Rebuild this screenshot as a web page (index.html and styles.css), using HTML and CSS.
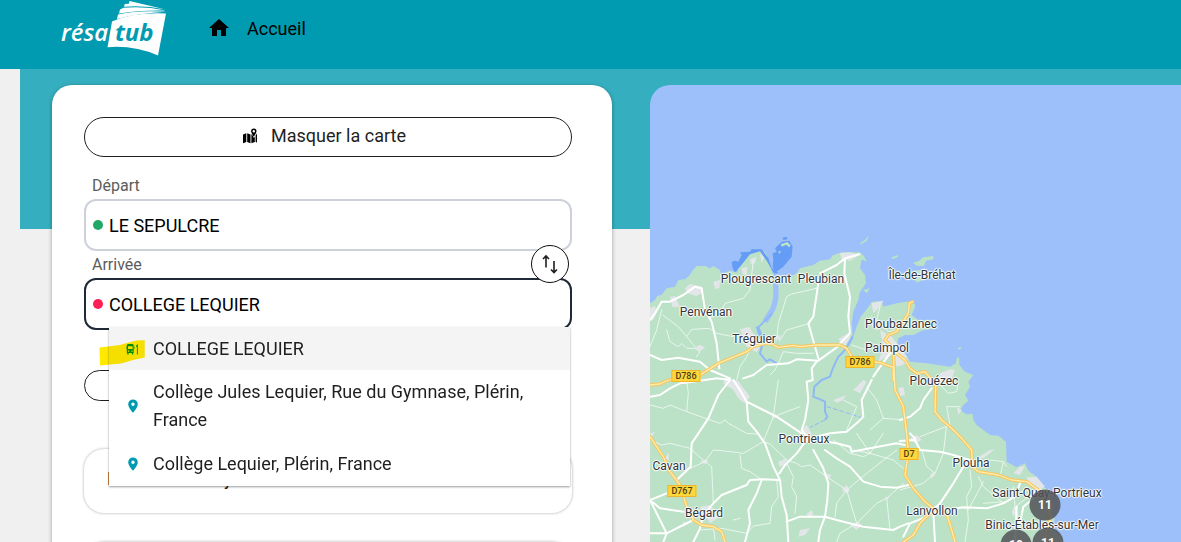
FILE: index.html
```html
<!DOCTYPE html>
<html lang="fr">
<head>
<meta charset="utf-8">
<meta name="viewport" content="width=device-width, initial-scale=1">
<title>résa tub</title>
<link rel="stylesheet" href="styles.css">
</head>
<body>
<header class="topbar">
  <a class="logo" href="#" aria-label="résa tub">
    <svg viewBox="0 0 106 56" width="106" height="56">
      <path class="logo-page" d="M51 21.500Q72 12 105 13.500L97 55.500Q73 45 46.500 47.200Z"/>
      <path class="logo-page" d="M57 14.500Q78 10 105 11.800Q78 13 56 19Z"/>
      <path class="logo-page" d="M62.500 7.800Q84 6 104.500 10.500Q78 10 58 13.500L59 9.500Z"/>
      <path class="logo-page" d="M68.500 1L104.500 9.500Q84 5 63 6.700L63.800 4L68 3.700Z"/>
      <text class="logo-resa" x="0" y="41">résa</text>
      <text class="logo-tub" x="54" y="41">tub</text>
    </svg>
  </a>
  <nav class="nav">
    <a class="nav-link" href="#">
      <svg viewBox="0 0 24 24" width="24" height="24" aria-hidden="true"><path d="M10 20v-6h4v6h5v-8h3L12 3 2 12h3v8z"/></svg>
      <span>Accueil</span>
    </a>
  </nav>
</header>

<main class="page">
  <section class="card">
    <button class="pill" type="button">
      <svg viewBox="0 0 16 16" width="16" height="16" aria-hidden="true">
        <path d="M1 6.500L4.300 5.200V14L1 15.200ZM5.200 5.200L8.500 6.500V15.200L5.200 14ZM9.400 6.500L10 6.300L11.900 10L12.800 8.300V14L9.400 15.200ZM13.600 7.500L15 5.500V14.500L13.600 14Z"/>
        <path fill-rule="evenodd" d="M11.800 0.500A2.700 2.700 0 0 1 14.500 3.200C14.500 5 11.800 8.600 11.800 8.600S9.100 5 9.100 3.200A2.700 2.700 0 0 1 11.800 0.500ZM11.800 2A1.200 1.200 0 1 0 11.800 4.400A1.200 1.200 0 1 0 11.800 2Z"/>
      </svg>
      <span>Masquer la carte</span>
    </button>

    <form class="trip">
      <div class="field">
        <label class="field-label" for="from">Départ</label>
        <div class="field-box">
          <span class="dot dot-from"></span>
          <input class="field-input" id="from" type="text" value="LE SEPULCRE">
        </div>
      </div>
      <div class="field">
        <label class="field-label" for="to">Arrivée</label>
        <div class="field-box field-box-active">
          <span class="dot dot-to"></span>
          <input class="field-input" id="to" type="text" value="COLLEGE LEQUIER" autocomplete="off">
        </div>
        <button class="swap" type="button" aria-label="Inverser">
          <svg viewBox="0 0 20 20" width="20" height="20" aria-hidden="true"><path d="M6 13.500V2M3 5L6 2L9 5M14 7V18.500M11 15.500L14 18.500L17 15.500"/></svg>
        </button>
        <ul class="suggestions">
          <li class="suggestion suggestion-current">
            <svg class="suggestion-icon" viewBox="0 0 16 16" width="16" height="16" aria-hidden="true">
              <path fill-rule="evenodd" d="M3 3H7.500Q8.700 3 8.700 4.500V12H8.200V13.500H6.900V12H3.600V13.500H2.300V12H1.800V4.500Q1.800 3 3 3ZM3 5.200V8H7.600V5.200ZM3 9.500V10.800H4.200V9.500ZM6.400 9.500V10.800H7.600V9.500Z"/>
              <path d="M1 5.500H1.500V8H1ZM9 5.500H9.500V8H9ZM11.200 4.500L12.800 3V13.500H11.900V6H11.200Z"/>
            </svg>
            <span>COLLEGE LEQUIER</span>
            <svg class="marker-stroke" viewBox="0 0 46 26" width="46" height="26" aria-hidden="true"><path d="M0.500 7.500L21 5L37 .5L45.700 0.200V17.500L34 20L22 23.500L1 25.500Z"/></svg>
          </li>
          <li class="suggestion">
            <svg class="suggestion-icon" viewBox="0 0 16 16" width="16" height="16" aria-hidden="true"><path fill-rule="evenodd" d="M8 1.500A4.800 4.800 0 0 1 12.800 6.200C12.800 9.500 8 14.800 8 14.800S3.200 9.500 3.200 6.200A4.800 4.800 0 0 1 8 1.500ZM8 4.500A1.700 1.700 0 1 0 8 7.900A1.700 1.700 0 1 0 8 4.500Z"/></svg>
            <span>Collège Jules Lequier, Rue du Gymnase, Plérin, France</span>
          </li>
          <li class="suggestion">
            <svg class="suggestion-icon" viewBox="0 0 16 16" width="16" height="16" aria-hidden="true"><path fill-rule="evenodd" d="M8 1.500A4.800 4.800 0 0 1 12.800 6.200C12.800 9.500 8 14.800 8 14.800S3.200 9.500 3.200 6.200A4.800 4.800 0 0 1 8 1.500ZM8 4.500A1.700 1.700 0 1 0 8 7.900A1.700 1.700 0 1 0 8 4.500Z"/></svg>
            <span>Collège Lequier, Plérin, France</span>
          </li>
        </ul>
      </div>
      <button class="small-pill" type="button"></button>
    </form>

    <div class="panel">Horaires du trajet</div>
    <div class="panel"></div>
  </section>

  <section class="map">
    <svg class="map-drawing" viewBox="0 -405 1593 1371" width="531" height="457" aria-hidden="true">
      <path class="land" d="M0 250L15 240 22 228 35 225 50 205 75 200 85 180 105 178 120 165 125 155 140 138 165 138 180 145 190 138 210 150 213 165 240 152 262 158 270 130 290 105 320 92 345 96 352 110 358 135 370 165 385 165 420 170 440 160 450 145 490 135 510 122 540 118 548 106 575 97 630 97 642 108 650 125 635 118 630 145 645 165 648 190 630 215 625 240 610 275 605 310 608 345 590 372 605 365 618 325 632 290 655 262 665 245 695 243 700 260 740 250 770 245 790 245 796 258 785 285 805 300 845 300 865 325 820 330 790 345 765 345 745 355 742 378 765 398 780 425 830 430 900 440 918 430 920 415 927 412 928 435 945 455 970 465 955 485 960 500 945 525 955 542 940 555 930 570 950 583 968 582 970 600 980 615 1000 630 1020 645 1045 647 1068 665 1070 725 1100 742 1125 730 1135 752 1160 770 1170 795 1195 810 1210 860 1205 880 1215 900 1200 920 1230 950 1240 966H0Z"/>
      <path class="land" d="M790 128L805 124 820 112 850 108 850 118 828 122 822 138 800 137ZM785 155L805 150 835 155 830 175 800 188ZM722 115L740 105 745 110 730 117ZM632 68L645 60 658 44 650 62 630 75ZM922 385L935 380 930 389ZM640 210L660 205 650 220Z"/>
      <path class="shoal" d="M245 125L255 122 265 125 275 105 270 97 300 95 305 88 335 88 355 115 365 145 385 158 375 165 350 122 330 94 300 103 270 140 255 157 248 145ZM370 118L368 100 380 95 375 85 395 65 418 62 428 80 425 110 400 140 375 158 368 140ZM398 53L410 50 412 58 400 60Z"/>
      <path class="land" d="M392 73L412 66 422 76 418 82 408 74 396 80ZM384 96L392 92 390 101Z"/>
      <path class="river river-wide" d="M378 160L377 205Q382 235 367 270L345 305"/>
      <path class="river" d="M367 280L325 322L340 360L330 400L350 425L360 418L380 430M320 320L328 345L340 370M608 350Q590 390 565 410Q545 450 540 470L515 480L493 500L490 530L510 538L525 545V575L532 590L525 600"/>
      <path class="river river-thin" d="M525 600L480 622M530 560L580 575L640 595"/>
      <g class="town">
        <path d="M105 205L120 192 155 200 160 215 140 228 112 220ZM60 230L75 228 90 260 68 262ZM0 265L15 258 20 280 8 302 0 300ZM190 185L210 180 208 205 195 207ZM300 118L320 110 315 130 302 132ZM330 100L342 112 335 130ZM275 145L292 140 290 165 278 162ZM570 100L600 97 628 105 600 122 575 118ZM270 328L300 320 305 335 335 370 320 397 290 380ZM565 358L600 335 600 355 585 378ZM375 348L392 346 390 365ZM665 250L700 242 690 260 670 280ZM690 330L725 350 770 410 770 430 740 440 730 400 685 425 700 380ZM870 460L900 448 915 450 905 475 860 485ZM135 382L150 374 165 382 150 394ZM225 475L265 483 280 505 300 530 285 550 265 535 250 510 220 490ZM550 540L590 525 575 542 560 548ZM610 510L640 480 650 485 630 520ZM745 505L760 500 765 525 750 528ZM0 640L15 636 5 650ZM42 720L55 698 57 720ZM150 725L168 718 175 725 165 732ZM365 585L380 590 370 598ZM455 630L470 615 485 640 475 655ZM385 725L410 715 405 735 388 740ZM525 760L545 765 535 778 525 775ZM575 810L590 795 600 812 590 820ZM150 860L180 855 210 890 180 910ZM98 905L112 910 103 920ZM470 882L485 870 490 885 475 890ZM445 950L450 930 480 925 465 945ZM600 915L625 905 635 915 620 930ZM705 830L718 832 710 840ZM650 700L665 695 660 705ZM780 655L800 645 815 660 795 670ZM920 560L935 570 925 585ZM980 715L1020 690 1035 688 1000 715ZM840 765L850 755 855 765 845 775ZM1090 760L1110 740 1125 738 1110 765ZM1130 772L1160 770 1185 800 1160 812 1135 790ZM1085 875L1093 862 1103 878 1090 888ZM940 865L955 860 955 870ZM825 870L860 855 870 880 835 890Z"/>
      </g>
      <g class="road-minor">
        <path d="M35 270L20 330 0 380M38 285L85 320 110 350 125 328 178 325 200 340 250 350M50 330L60 365 85 380 95 370 110 385 135 385 150 395 140 410M110 350L135 380M178 295L210 280 225 250 280 235 300 210 310 120M380 360L385 310 410 230 425 222 500 205M390 360L410 330 480 310M490 400L440 400 400 395 385 430 375 450 360 465M300 385L290 410 270 440 260 480M0 555L40 565 60 555 110 575 175 598 210 610 225 600 235 610 290 640 320 642M110 480L115 520 110 575M0 660L35 675 60 670 120 685 165 725 185 740 190 850M120 745L165 725 190 690 215 692 240 695 280 700 340 665M270 705L275 745 300 755 330 775 340 780M340 665L370 590 385 480M370 590L450 560M340 665L360 672 410 720 440 730 455 740 480 735 530 770M410 730L430 770 425 800 440 830 435 880M380 780L385 830 365 860 360 910 310 918 290 940 215 925 150 930M620 640L660 700 610 690M550 660L600 700 640 710 660 700 700 640M660 700L730 720 760 745M530 770L590 810 560 850 555 890M590 810L650 760 740 690M590 810L620 910 680 850 710 835 760 790M710 835L720 930M620 910L570 940 560 966M590 630L620 560 580 540M650 500L680 540 700 595 660 630M700 595L765 600M605 375L650 390M690 260L680 300 715 335 740 330M665 290L680 330M250 900L270 895M195 960L190 920"/>
        <path d="M860 485L895 520 920 515 925 490M810 650L900 615 890 560 930 560M890 615L880 700 855 760 820 790 750 810M855 760L830 740 815 690M985 770L1000 800 1060 850M1000 785L955 870M960 750L965 800 950 830 955 900 945 966M1090 800L1095 860 1110 910M1090 865L1160 810M1000 850L1060 845M1020 720L1060 725 1070 740M1060 725L1050 770"/>
      </g>
      <g class="road">
        <path d="M0 300L15 280 35 245 60 245 100 225 135 200 155 205 165 270 185 305 200 370 208 445M628 103L585 115 560 135 510 160M585 115L583 160 600 230 595 290 600 340 570 370M505 190L490 290 475 310 495 380 505 415M0 405L35 420 85 413 150 425 180 450 240 475M280 475L310 465 350 435 415 430 440 418 505 422 570 375M500 425L485 445 488 480M0 530L30 525 60 505 90 490 130 485 200 475 240 480 205 525 175 595 125 670 122 740 80 780M250 480L270 510 290 545 295 605 320 635 345 670 370 740 390 780 395 830 410 885 415 966M290 545L340 570 380 590 455 640M488 480L470 485 475 540 465 600 455 630 470 650M480 655L540 640 590 635 625 605 640 590 635 540 665 480M670 470L680 455 720 400M470 660L440 700 405 735 388 760M500 660L560 670 600 680 605 695 660 685 740 670 765 675M525 690L560 715 600 740 640 785 690 800 740 803 775 795M490 690L520 745 535 790 532 840 525 890 510 930 505 966M385 780L340 778 300 780 290 795 215 825 190 850 160 885 150 925 130 966M335 780L320 820 295 870 300 910 285 966M410 905L450 890 525 890 560 900 640 920 730 930 750 920 775 910M0 840L30 865 100 875M0 840L30 900 50 940 40 966M0 940L50 940 100 915 130 900M0 840L50 820"/>
        <path d="M845 505L820 540 810 565 780 590 750 600M750 663L795 660 810 690 870 695 910 705 960 720M795 655L780 640M940 740L910 790 870 850 850 870 900 868 940 862 1010 865 1060 850 1095 830 1110 790M850 880L855 966M830 890L780 910 760 950M1100 860L1095 966M1170 820L1120 860 1110 910"/>
      </g>
      <g class="highway">
        <path d="M60 480L150 465 205 430 290 395 310 380 345 370 365 372 385 382 430 376 450 380 500 375 570 375 590 385 605 410M665 425L690 428 730 442V480M730 385L732 445 735 510 760 560 770 640 775 700 765 765 790 805 825 845 850 865 890 880 905 930 915 966M788 245L778 250 775 280 755 310 740 335 715 345 705 360 720 375 740 400 765 420 780 445 800 460 825 455 845 480 857 500 855 575 875 600 900 620 935 655 965 690 968 740 985 755 1045 765 1085 780 1130 785 1165 810 1185 830M1200 870V900L1185 950 1200 966M0 495L30 492 55 480M0 650L40 710 60 755 90 795 110 860 130 900 155 915 190 920 215 935 225 966M760 966L790 945 810 910 850 870"/>
        <path class="highway-core" d="M60 480L150 465 205 430 290 395 310 380 345 370 365 372 385 382 430 376 450 380 500 375 570 375 590 385 605 410M665 425L690 428 730 442V480M730 385L732 445 735 510 760 560 770 640 775 700 765 765 790 805 825 845 850 865 890 880 905 930 915 966M788 245L778 250 775 280 755 310 740 335 715 345 705 360 720 375 740 400 765 420 780 445 800 460 825 455 845 480 857 500 855 575 875 600 900 620 935 655 965 690 968 740 985 755 1045 765 1085 780 1130 785 1165 810 1185 830M1200 870V900L1185 950 1200 966M0 495L30 492 55 480M0 650L40 710 60 755 90 795 110 860 130 900 155 915 190 920 215 935 225 966M760 966L790 945 810 910 850 870"/>
      </g>
    </svg>

    <span class="place plougrescant">Plougrescant</span>
    <span class="place pleubian">Pleubian</span>
    <span class="place brehat">Île-de-Bréhat</span>
    <span class="place penvenan">Penvénan</span>
    <span class="place treguier">Tréguier</span>
    <span class="place ploubazlanec">Ploubazlanec</span>
    <span class="place paimpol">Paimpol</span>
    <span class="place plouezec">Plouézec</span>
    <span class="place pontrieux">Pontrieux</span>
    <span class="place cavan">Cavan</span>
    <span class="place plouha">Plouha</span>
    <span class="place begard">Bégard</span>
    <span class="place lanvollon">Lanvollon</span>
    <span class="place saint-quay">Saint-Quay-Portrieux</span>
    <span class="place binic">Binic-Étables-sur-Mer</span>

    <span class="shield d786-west">D786</span>
    <span class="shield d786-east">D786</span>
    <span class="shield d7">D7</span>
    <span class="shield d767">D767</span>

    <span class="cluster cluster-north">11</span>
    <span class="cluster cluster-west">10</span>
    <span class="cluster cluster-east">11</span>
  </section>
</main>
</body>
</html>
```

FILE: styles.css
```css
* {
  box-sizing: border-box;
}

body {
  margin: 0;
  height: 100vh;
  display: flex;
  flex-direction: column;
  overflow: hidden;
  background: #f0f0f0;
  color: #1f1f1f;
  font-family: Roboto, "Liberation Sans", sans-serif;
  font-size: 18px;
}

button,
input {
  font: inherit;
  color: inherit;
}

/* Header */
.topbar {
  flex: none;
  display: flex;
  align-items: flex-start;
  gap: 40px;
  height: 69px;
  padding-left: 61px;
  background: #009bb1;
}

.logo {
  display: block;
  height: 56px;
}

.logo-page {
  fill: #fff;
}

.logo-resa,
.logo-tub {
  font-family: "Open Sans", sans-serif;
  font-style: italic;
  font-size: 24px;
}

.logo-resa {
  fill: #fff;
  font-weight: 600;
}

.logo-tub {
  fill: #009bb1;
  font-weight: 700;
}

.nav-link {
  display: flex;
  align-items: center;
  gap: 16px;
  height: 56px;
  color: #000;
  text-decoration: none;
}

/* Page */
.page {
  flex: 1;
  min-height: 0;
  display: grid;
  grid-template-columns: minmax(0, 560fr) minmax(0, 531fr);
  gap: 38px;
  margin-left: 20px;
  padding: 16px 0 0 32px;
  overflow: hidden;
  background: linear-gradient(#35afbf, #35afbf) top / 100% 160px no-repeat;
}

.card {
  padding: 32px 40px 0 32px;
  border-radius: 20px 20px 0 0;
  background: #fff;
  box-shadow: 0 1px 4px rgba(0, 0, 0, 0.35);
}

.pill {
  display: flex;
  align-items: center;
  justify-content: center;
  gap: 13px;
  width: 100%;
  height: 40px;
  padding: 0 8px 3px 0;
  border: 1px solid #1f1f1f;
  border-radius: 20px;
  background: #fff;
}

/* Trip form */
.trip {
  margin-top: 15px;
}

.field {
  position: relative;
}

.field-label {
  display: block;
  padding-left: 8px;
  color: #5c5c5c;
  font-size: 16px;
  line-height: 27px;
}

.field-box {
  display: flex;
  align-items: center;
  gap: 6px;
  height: 52px;
  padding: 0 7px;
  border: 2px solid #cdd1d9;
  border-radius: 12px;
  background: #fff;
}

.field-box-active {
  border-color: #1f2937;
}

.dot {
  flex: none;
  width: 10px;
  height: 10px;
  border-radius: 50%;
}

.dot-from {
  background: #21a866;
}

.dot-to {
  background: #ff1f57;
}

.field-input {
  flex: 1;
  min-width: 0;
  padding: 0;
  border: 0;
  outline: 0;
  background: none;
  color: #000;
}

.swap {
  position: absolute;
  top: -6px;
  right: 3px;
  display: grid;
  place-items: center;
  width: 38px;
  height: 38px;
  padding: 0;
  border: 1px solid #111;
  border-radius: 50%;
  background: #fff;
}

.swap path {
  fill: none;
  stroke: #1f1f1f;
  stroke-width: 1.6;
}

.small-pill {
  display: block;
  width: 200px;
  height: 31px;
  margin-top: 40px;
  border: 1px solid #1f1f1f;
  border-radius: 16px;
  background: #fff;
}

/* Suggestions */
.suggestions {
  position: absolute;
  z-index: 1;
  top: calc(100% - 3px);
  left: 25px;
  right: 2px;
  margin: 0;
  padding: 0;
  list-style: none;
  background: #fff;
  box-shadow: 0 1px 2px rgba(0, 0, 0, 0.4);
}

.suggestion {
  position: relative;
  display: flex;
  align-items: center;
  gap: 12px;
  padding: 8px 24px 8px 16px;
  line-height: 28px;
}

.suggestion-current {
  padding-bottom: 7px;
  background: #f4f4f4;
}

.suggestion-icon {
  flex: none;
  fill: #009bb1;
}

.marker-stroke {
  position: absolute;
  top: 13px;
  left: -10px;
  fill: #ffe900;
  mix-blend-mode: multiply;
}

.panel {
  min-height: 64px;
  margin-top: 48px;
  padding: 0 23px;
  border-radius: 20px;
  line-height: 60px;
  box-shadow: 0 0 3px rgba(0, 0, 0, 0.35);
}

.panel + .panel {
  margin-top: 29px;
}

/* Map */
.map {
  position: relative;
  overflow: hidden;
  border-radius: 20px 0 0 0;
  background: #9dc0fa;
}

.map-drawing {
  display: block;
}

.land {
  fill: #bbe2c6;
}

.shoal {
  fill: #659df6;
}

.river {
  fill: none;
  stroke: #8fb8f6;
  stroke-width: 6;
  stroke-linejoin: round;
}

.river-wide {
  stroke: #9dc0fa;
  stroke-width: 16;
}

.river-thin {
  stroke-width: 3;
  stroke-dasharray: 14 6;
}

.town {
  fill: #e3e6e8;
}

.road,
.road-minor,
.highway {
  fill: none;
  stroke-linejoin: round;
  stroke-linecap: round;
}

.road {
  stroke: #fff;
  stroke-width: 6;
}

.road-minor {
  stroke: #e9f6ee;
  stroke-width: 3;
}

.highway {
  stroke: #f8c55c;
  stroke-width: 10;
}

.highway-core {
  stroke: #ffeeb0;
  stroke-width: 4;
}

.place,
.shield,
.cluster {
  position: absolute;
  transform: translate(-50%, -50%);
  white-space: nowrap;
}

.place {
  color: #30343a;
  font-size: 12px;
  line-height: 14px;
  text-shadow: 1px 0 1px #fff, -1px 0 1px #fff, 0 1px 1px #fff, 0 -1px 1px #fff, 0 0 2px #fff;
}

.plougrescant { left: 106px; top: 194px; }
.pleubian { left: 171px; top: 194px; }
.brehat { left: 272px; top: 190px; }
.penvenan { left: 56px; top: 227px; }
.treguier { left: 104px; top: 254px; }
.ploubazlanec { left: 251px; top: 239px; }
.paimpol { left: 237px; top: 263px; }
.plouezec { left: 284px; top: 296px; }
.pontrieux { left: 154px; top: 354px; }
.cavan { left: 19px; top: 381px; }
.plouha { left: 321px; top: 378px; }
.begard { left: 54px; top: 428px; }
.lanvollon { left: 282px; top: 426px; }
.saint-quay { left: 397px; top: 408px; }
.binic { left: 392px; top: 440px; }

.shield {
  padding: 0 3px;
  border: 1px solid #efb62c;
  background: #fdd73c;
  color: #4a3d14;
  font-size: 9px;
  font-weight: 500;
  line-height: 10px;
}

.d786-west { left: 36px; top: 291px; }
.d786-east { left: 210px; top: 277px; }
.d7 { left: 259px; top: 369px; }
.d767 { left: 32px; top: 406px; }

.cluster {
  width: 31px;
  height: 31px;
  border-radius: 50%;
  background: rgba(82, 82, 86, 0.85);
  color: #fff;
  font-size: 12px;
  font-weight: 700;
  line-height: 31px;
  text-align: center;
}

.cluster-north { left: 395px; top: 420px; }
.cluster-west { left: 366px; top: 460px; }
.cluster-east { left: 398px; top: 458px; }
```
